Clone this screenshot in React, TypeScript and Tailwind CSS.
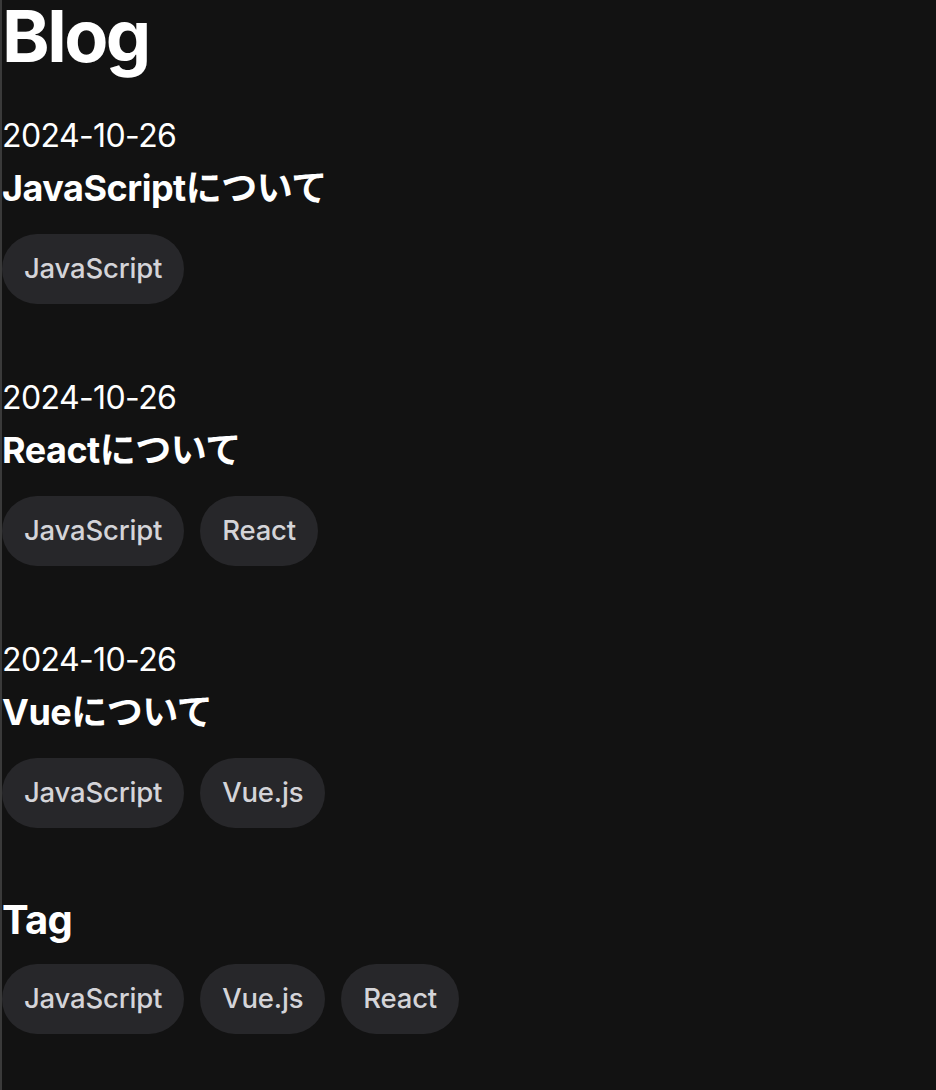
import React from "react";

const posts = [
  { date: "2024-10-26", title: "JavaScriptについて", tags: ["JavaScript"] },
  { date: "2024-10-26", title: "Reactについて", tags: ["JavaScript", "React"] },
  { date: "2024-10-26", title: "Vueについて", tags: ["JavaScript", "Vue.js"] },
];

const font = { fontFamily: 'Inter, "Noto Sans CJK JP", sans-serif' };

function Pill({ label }: { label: string }) {
  return (
    <span className="flex h-[70px] items-center rounded-full bg-[#27272a] px-[22px] text-[27.5px] font-medium tracking-[-0.2px] text-[#d4d4d8]">
      {label}
    </span>
  );
}

export default function App() {
  return (
    <div
      className="min-h-[1090px] w-full border-l-2 border-[#3a3a3a] bg-[#121212] text-white"
      style={font}
    >
      <h1 className="text-[72px] font-bold leading-[72px] tracking-[-2.5px]">Blog</h1>
      <div className="mt-[40px] flex flex-col gap-[70px]">
        {posts.map((p, i) => (
          <div key={i} className="flex flex-col">
            <div className="text-[32px] leading-[48px] tracking-[-0.6px]">{p.date}</div>
            <div className="text-[36px] font-bold leading-[56px] tracking-[-0.5px]">{p.title}</div>
            <div className="mt-[18px] flex gap-[16px]">
              {p.tags.map((t) => (
                <Pill key={t} label={t} />
              ))}
            </div>
          </div>
        ))}
      </div>
      <h2 className="mt-[64px] text-[40px] font-bold leading-[56px] tracking-[-0.8px]">Tag</h2>
      <div className="mt-[16px] flex gap-[16px]">
        {["JavaScript", "Vue.js", "React"].map((t) => (
          <Pill key={t} label={t} />
        ))}
      </div>
    </div>
  );
}
